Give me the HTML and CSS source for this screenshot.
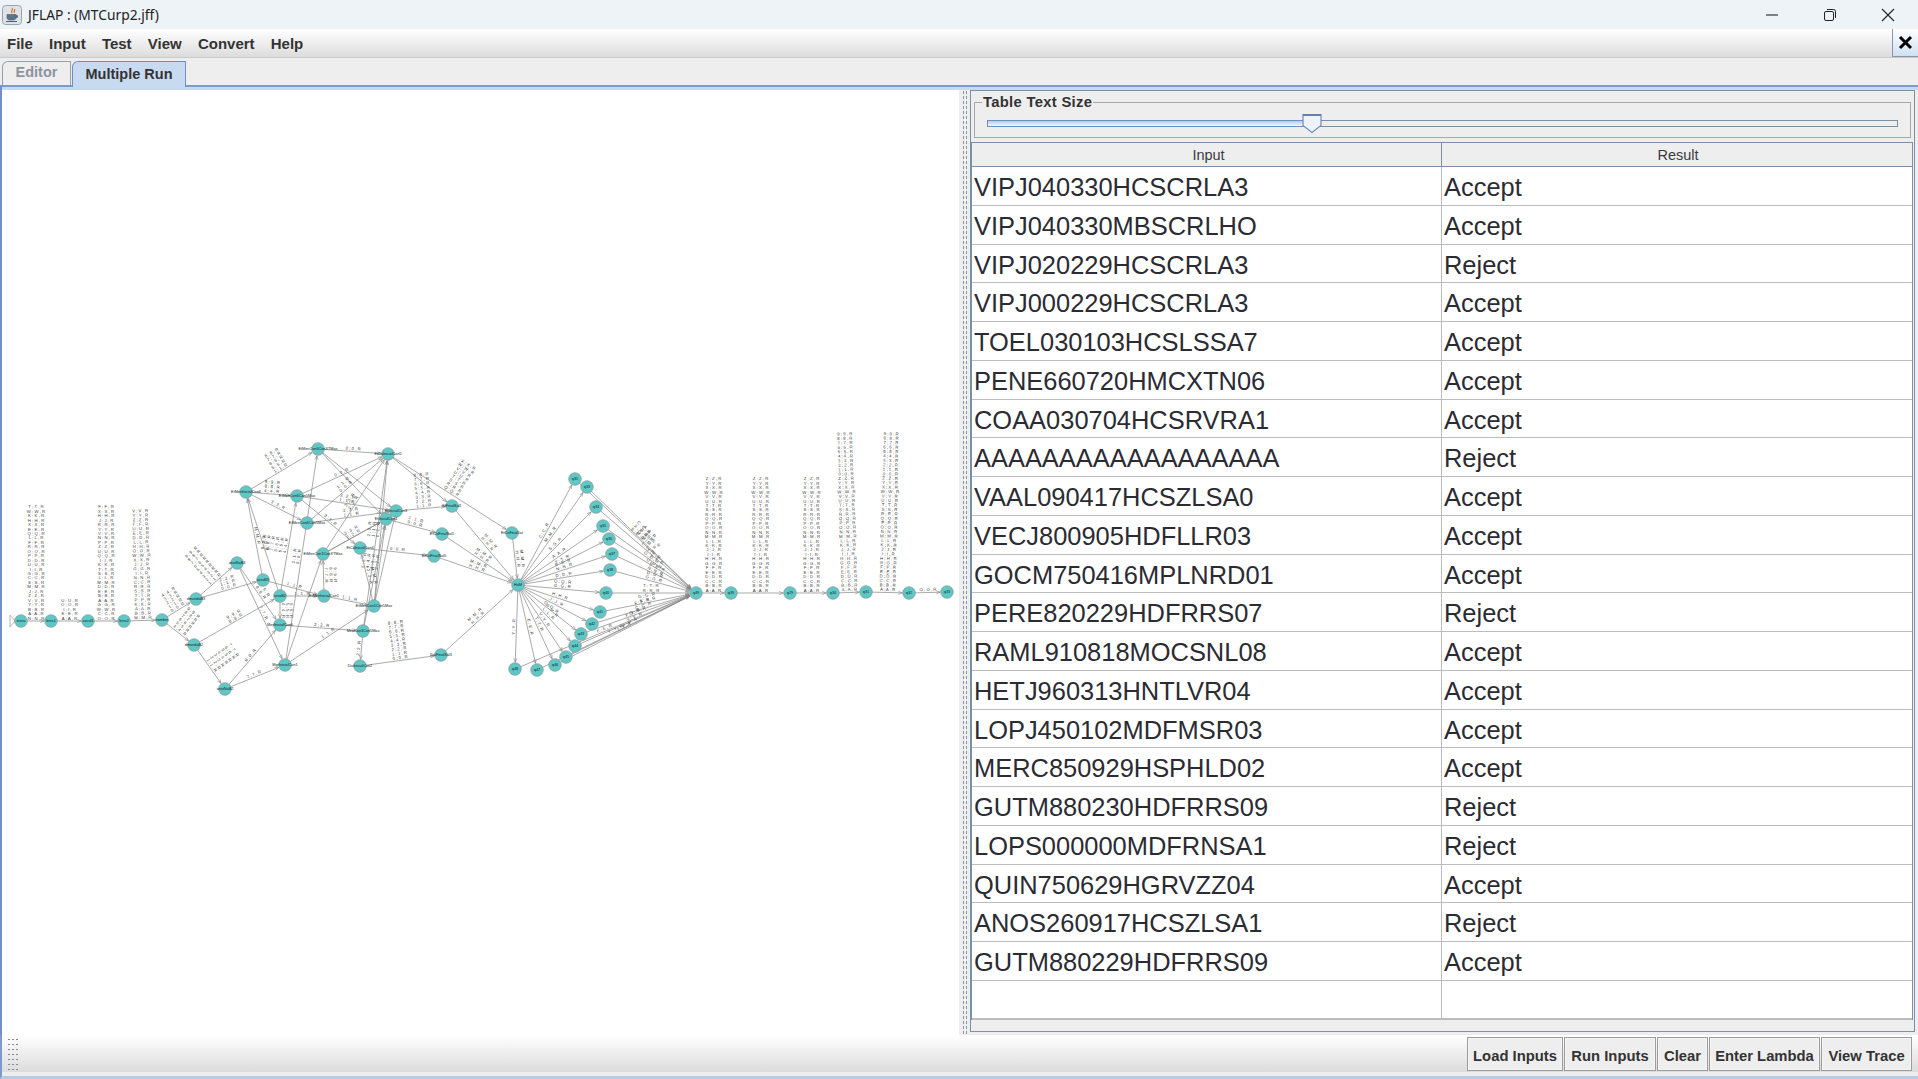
FILE: index.html
```html
<!DOCTYPE html>
<html>
<head>
<meta charset="utf-8">
<title>JFLAP : (MTCurp2.jff)</title>
<link rel="stylesheet" href="styles.css">
</head>
<body>

<div class="titlebar">
	<svg class="appicon" width="20" height="20" viewBox="0 0 20 20">
		<rect x="0.5" y="0.5" width="19" height="19" rx="3" fill="#dfe3e8" stroke="#9aa3ad"/>
		<path d="M10 3c2 2-2 3 0 5M12.500 4c1 1.500-1.500 2.500 0 4" fill="none" stroke="#e0762a" stroke-width="1.300"/>
		<path d="M5 9.500h9v3c0 2-1.500 2.500-3 2.500h-3c-1.500 0-3-.5-3-2.500zM14 10.500h1.500v2H14" fill="#5b7488" stroke="#4a5f72" stroke-width="0.600"/>
		<path d="M4 16.500h11" stroke="#4a5f72" stroke-width="1"/>
	</svg>
	<span class="title">JFLAP : (MTCurp2.jff)</span>
	<div class="winbtns">
		<svg width="14" height="14" viewBox="0 0 14 14"><path d="M1 7h12" stroke="#222" stroke-width="1.100"/></svg>
		<svg width="14" height="14" viewBox="0 0 14 14"><rect x="1.500" y="3.500" width="9" height="9" rx="1.500" fill="none" stroke="#222"/><path d="M4 1.500h6.500a2 2 0 0 1 2 2V10" fill="none" stroke="#222"/></svg>
		<svg width="14" height="14" viewBox="0 0 14 14"><path d="M1 1l12 12M13 1L1 13" stroke="#222" stroke-width="1.100"/></svg>
	</div>
</div>

<div class="menubar">
	<span>File</span>
	<span>Input</span>
	<span>Test</span>
	<span>View</span>
	<span>Convert</span>
	<span>Help</span>
	<div class="closetab">
		<svg width="15" height="15" viewBox="0 0 15 15"><path d="M2 2l11 11M13 2L2 13" stroke="#000" stroke-width="3"/></svg>
	</div>
</div>

<div class="tabs">
	<div class="tab">Editor</div>
	<div class="tab active">Multiple Run</div>
</div>

<div class="main">
	<div class="canvas">
		<svg id="graph" viewBox="2 90 957 945" width="957" height="945"></svg>
	</div>
	<div class="splitter"></div>
	<div class="panel">
		<fieldset class="sizebox">
			<legend>Table Text Size</legend>
			<div class="track">
				<div class="trackfill" style="width: 319px"></div>
				<svg class="thumb" width="20" height="21" viewBox="0 0 20 21">
					<path d="M1 1.500h18v11l-9 7-9-7z" fill="#eef3fa" stroke="#6d8ec4" stroke-width="1.200"/>
					<path d="M1 2h18" stroke="#5f7fb5" stroke-width="2"/>
				</svg>
			</div>
		</fieldset>
		<div class="tablewrap">
			<div class="row head"><span>Input</span><span>Result</span></div>
			<div class="row"><span>VIPJ040330HCSCRLA3</span><span>Accept</span></div>
			<div class="row"><span>VIPJ040330MBSCRLHO</span><span>Accept</span></div>
			<div class="row"><span>VIPJ020229HCSCRLA3</span><span>Reject</span></div>
			<div class="row"><span>VIPJ000229HCSCRLA3</span><span>Accept</span></div>
			<div class="row"><span>TOEL030103HCSLSSA7</span><span>Accept</span></div>
			<div class="row"><span>PENE660720HMCXTN06</span><span>Accept</span></div>
			<div class="row"><span>COAA030704HCSRVRA1</span><span>Accept</span></div>
			<div class="row"><span>AAAAAAAAAAAAAAAAAA</span><span>Reject</span></div>
			<div class="row"><span>VAAL090417HCSZLSA0</span><span>Accept</span></div>
			<div class="row"><span>VECJ800905HDFLLR03</span><span>Accept</span></div>
			<div class="row"><span>GOCM750416MPLNRD01</span><span>Accept</span></div>
			<div class="row"><span>PERE820229HDFRRS07</span><span>Reject</span></div>
			<div class="row"><span>RAML910818MOCSNL08</span><span>Accept</span></div>
			<div class="row"><span>HETJ960313HNTLVR04</span><span>Accept</span></div>
			<div class="row"><span>LOPJ450102MDFMSR03</span><span>Accept</span></div>
			<div class="row"><span>MERC850929HSPHLD02</span><span>Accept</span></div>
			<div class="row"><span>GUTM880230HDFRRS09</span><span>Reject</span></div>
			<div class="row"><span>LOPS000000MDFRNSA1</span><span>Reject</span></div>
			<div class="row"><span>QUIN750629HGRVZZ04</span><span>Accept</span></div>
			<div class="row"><span>ANOS260917HCSZLSA1</span><span>Reject</span></div>
			<div class="row"><span>GUTM880229HDFRRS09</span><span>Accept</span></div>
			<div class="row empty"><span></span><span></span></div>
		</div>
	</div>
</div>

<div class="toolbar">
	<div class="grip"></div>
	<div class="buttons">
		<button class="load">Load Inputs</button>
		<button class="run">Run Inputs</button>
		<button class="clear">Clear</button>
		<button class="lambda">Enter Lambda</button>
		<button class="trace">View Trace</button>
	</div>
</div>

<script src="graph.js"></script>
</body>
</html>
```

FILE: styles.css
```css
html, body {
	margin: 0;
	height: 100%;
}
body {
	width: 1918px;
	height: 1079px;
	overflow: hidden;
	font-family: "Liberation Sans", Arial, sans-serif;
	color: #333;
	background-color: #eeeeee;
	display: flex;
	flex-direction: column;
}

.titlebar {
	height: 29px;
	flex: none;
	display: flex;
	align-items: center;
	padding-left: 2px;
	background-color: #eef3f8;
}
.title {
	margin-left: 6px;
	font-family: "Noto Sans", sans-serif;
	font-size: 13.800px;
	color: #222;
}
.winbtns {
	margin-left: auto;
	display: flex;
	gap: 44px;
	padding-right: 23px;
}
.appicon {
	display: block;
}

.menubar {
	height: 27px;
	flex: none;
	display: flex;
	align-items: center;
	gap: 16.200px;
	padding: 1px 0 0 7px;
	font-size: 15px;
	font-weight: bold;
	border-bottom: 1px solid #c9c9c9;
	background: linear-gradient(#ffffff, #dcdcdc);
}
.closetab {
	margin-left: auto;
	width: 25px;
	height: 27px;
	margin-top: -1px;
	display: flex;
	align-items: center;
	justify-content: center;
	border: 1px solid #8396aa;
	border-width: 0 0 1px 1px;
	background: linear-gradient(#ffffff, #cfe0f2);
}

.tabs {
	height: 27px;
	flex: none;
	display: flex;
	align-items: flex-end;
	padding-left: 2px;
	gap: 1px;
	font-size: 14.500px;
	font-weight: bold;
}
.tab {
	height: 23px;
	width: 67px;
	border: 1px solid #98a0a8;
	border-bottom: none;
	border-top-left-radius: 6px;
	text-align: center;
	line-height: 21px;
	color: #8b93a1;
	background-color: #eeeeee;
}
.tab.active {
	width: 112px;
	height: 25px;
	margin-bottom: -2px;
	position: relative;
	line-height: 25px;
	color: #333;
	border-color: #6d8ec4;
	background-color: #c8daf0;
}

.main {
	height: 950px;
	flex: none;
	box-sizing: border-box;
	display: flex;
	border-top: 2px solid #7d9aca;
	border-left: 2px solid #6f90c8;
	padding-top: 3px;
	background: linear-gradient(#c8daf0 3px, #eeeeee 3px);
}
.canvas {
	width: 957px;
	flex: none;
	background-color: #ffffff;
}
#graph {
	display: block;
}
.edgetext {
	font-size: 4.300px;
	fill: #404040;
	text-anchor: middle;
}
.nodetext {
	font-size: 3.800px;
	fill: #102525;
	text-anchor: middle;
}
.splitter {
	width: 6px;
	flex: none;
	margin: 0 2px 0 3px;
	background-image: radial-gradient(#8a97a6 0.7px, transparent 0.8px);
	background-size: 3px 5px;
}
.panel {
	width: 945px;
	height: 942px;
	flex: none;
	box-sizing: border-box;
	border: 1px solid #7b8fa5;
	padding: 0 1px 0 0;
}

.sizebox {
	margin: 3px 2px 0 3px;
	padding: 0;
	height: 44px;
	box-sizing: border-box;
	border: 1px solid #a8a8a8;
}
.sizebox legend {
	margin-left: 7px;
	padding: 0 1px;
	font-size: 14.800px;
	font-weight: bold;
	letter-spacing: 0.300px;
}
.track {
	position: relative;
	margin: 10px 12px 0 12px;
	height: 7px;
	box-sizing: border-box;
	border: 1px solid #7b8fa5;
}
.trackfill {
	height: 5px;
	background: linear-gradient(#b9cde8, #f3f7fc);
	box-shadow: 0 0 0 1px #6d8ec4;
}
.thumb {
	position: absolute;
	left: 314px;
	top: -8px;
}

.tablewrap {
	margin-top: 4px;
	border-top: 1px solid #7b8fa5;
	border-left: 1px solid #7b8fa5;
	border-right: 1px solid #7b8fa5;
}
.row {
	height: 38.760px;
	box-sizing: border-box;
	display: flex;
	align-items: center;
	font-size: 25.450px;
	color: #2b2b33;
	background-color: #ffffff;
	border-bottom: 1px solid #bbbbbb;
}
.row span {
	width: 470px;
	height: 100%;
	flex: none;
	box-sizing: border-box;
	padding-left: 2px;
	line-height: 41px;
	border-right: 1px solid #bbbbbb;
}
.row span:last-child {
	flex: 1;
	width: auto;
	border-right: none;
}
.row.head {
	height: 24px;
	font-size: 14.500px;
	color: #3a3a40;
	background-color: #eeeeee;
	border-bottom: 1px solid #7b8fa5;
}
.row.head span {
	text-align: center;
	line-height: 25px;
	border-color: #7b8fa5;
}
.row.head span:first-child {
	padding-left: 4px;
}
.row.empty {
	height: 39px;
	border-bottom: 2px solid #bbbbbb;
}

.toolbar {
	flex: 1;
	display: flex;
	align-items: flex-start;
	justify-content: space-between;
	box-sizing: border-box;
	padding: 2px 6px 0 5px;
	border-left: 2px solid #7d9aca;
	border-bottom: 3px solid #b6cce6;
	background: linear-gradient(#ffffff, #dcdcdc 90%, #eeeeee 90%);
}
.grip {
	width: 12px;
	height: 35px;
	background-image: radial-gradient(#7f8c9b 0.7px, transparent 0.8px);
	background-size: 4px 5px;
}
.buttons {
	display: flex;
	gap: 1px;
}
.buttons button {
	height: 34px;
	box-sizing: border-box;
	padding: 3px 0 0 0;
	border: 1px solid #9c9c9c;
	outline: 1px solid #f5f5f5;
	outline-offset: -2px;
	font-family: "Liberation Sans", Arial, sans-serif;
	font-size: 14.800px;
	font-weight: bold;
	color: #333;
	background-color: #eeeeee;
}
.load { width: 96px; }
.run { width: 92px; }
.clear { width: 51px; }
.lambda { width: 111px; }
.trace { width: 91px; }
```

FILE: graph.js
```js
// Turing machine drawn the way JFLAP lays it out: label stacks sit on the edge midpoint.
var nodes = {
	inicio: [21, 621, "inicio"], l1: [51, 621, "letra1"], v1: [88, 621, "vocal1"], l2: [124, 621, "letra2"],
	nom: [162, 620, "nombre"], dm3: [196, 599, "dmundaB3"], dm2: [194, 645, "dmundaB2"],
	an3: [237, 563, "anioNaB3"], ab3: [263, 580, "anioB3"], ab2: [280, 596, "anioB2"],
	mes: [280, 625, "MesInicialCon6"], an2: [225, 689, "anioNaB2"], mgr: [285, 665, "MgrInicialCon1"],
	e6: [246, 492, "EtMenInicialCon6"], ex: [318, 449, "EtMenCon6CanXTMas"], c5: [388, 454, "EtCaInicialCon5"],
	e5: [297, 496, "EtMenCon6Can5Mas"], e4: [307, 523, "EtMenCon6Con5Mas"], i3: [396, 511, "EtInicialCon3"],
	i4: [386, 519, "EtInicialCon4"], e1x: [323, 554, "EtMenCon1ConXTMas"], c4: [360, 548, "EtCaInicialCon4"],
	e1: [324, 596, "EtMenInicialCon1"], e15: [374, 606, "EtMenCon1Con5Mas"], m3: [363, 631, "MenCon3Con5Mas"],
	di: [360, 666, "DiaInicialCon2"], df: [441, 655, "DiaFinalSal3"], f2: [452, 506, "EtFinalSal1"],
	f1: [442, 534, "EtCaFinalSal1"], f0: [434, 556, "EtCaFinalSal0"], fa: [512, 533, "EtCaFinal1at"],
	hom: [518, 585, "HoM"], q31: [575, 479, "q31"], q33: [587, 487, "q33"], q34: [596, 507, "q34"],
	q35: [603, 526, "q35"], q36: [609, 539, "q36"], q37: [612, 554, "q37"], q38: [610, 570, "q38"],
	q40: [606, 593, "q40"], q41: [600, 612, "q41"], q42: [592, 624, "q42"], q43: [581, 634, "q43"],
	q44: [575, 646, "q44"], q45: [566, 657, "q45"], q46: [555, 665, "q46"], q47: [537, 670, "q47"],
	q48: [515, 669, "q48"], qh: [696, 593, "q49"], r1: [731, 593, "q39"], r2: [790, 593, "q29"],
	r3: [833, 593, "q30"], r4: [866, 592, "q31"], r5: [909, 593, "q32"], r6: [947, 592, "q33"]
};

var az = "ZYXWVUTSRQPONMLKJIHGFEDCBA";
var num = "9876543210";

var edges = [
	["inicio", "l1", "TWKHXEQLFROPDUIGCSMJZVYBAN"], ["l1", "v1", "UOIEA"],
	["v1", "l2", "FXHJRYVNPZUQIKTSLMDEBAGWCO"], ["l2", "nom", "VYZFUEDLHOWXJGINCRSTPKABM"],
	["nom", "dm3", "43210"], ["nom", "dm2", "987654"], ["dm3", "an3", "987654321"], ["dm3", "ab3", "210"],
	["dm2", "ab2", "98"], ["dm2", "an2", "7654321"], ["an3", "mes", "98"], ["an3", "mgr", "7"],
	["ab3", "e6", "M"], ["ab2", "e6", "0"], ["ab3", "e1", "1"], ["ab2", "e1", "1"], ["ab2", "e5", "987654"],
	["ab2", "mes", "654"], ["an2", "mes", "0"], ["an2", "mgr", "7"], ["mes", "m3", "2"], ["mgr", "ex", "10"],
	["mgr", "e1x", ""], ["mgr", "e15", "1"], ["e6", "ex", "87651"], ["e6", "e5", "984"], ["e6", "e4", "3"],
	["ex", "c5", "0"], ["ex", "i3", ""], ["ex", "i4", ""], ["e5", "c5", "0"], ["e5", "i3", "21"], ["e5", "c4", "3"],
	["e4", "c5", "10"], ["e4", "i3", "21"], ["e1x", "c5", "32"], ["e1x", "i4", "32"], ["e1x", "i4", ""],
	["e1", "e1x", "987"], ["e1", "e15", "1"], ["e15", "c5", "210"], ["e15", "i3", ""], ["e15", "i4", "5432"],
	["e15", "c4", "M2"], ["m3", "i4", ""], ["m3", "c5", ""], ["m3", "di", "2"], ["di", "df", "876543210"],
	["df", "hom", "MH"], ["c5", "fa", "XWVUTSRQ"], ["c5", "f2", ""], ["i3", "f2", "87654321"], ["i4", "f1", "10"],
	["c4", "f0", "0"], ["f2", "hom", "MH"], ["f1", "hom", "MH"], ["f0", "hom", "MH"], ["fa", "hom", "MH"],
	["hom", "q31", "C"], ["hom", "q33", "M"], ["hom", "q34", "S"], ["hom", "q35", "A"], ["hom", "q36", "T"],
	["hom", "q37", "BN"], ["hom", "q38", "D"], ["hom", "q40", "QG"], ["hom", "q41", "H"], ["hom", "q42", "J"],
	["hom", "q43", "O"], ["hom", "q44", "PL"], ["hom", "q45", "V"], ["hom", "q46", "T"], ["hom", "q47", "E"],
	["hom", "q48", "Y"], ["q31", "qh", "CXE"], ["q33", "qh", "ABM"], ["q34", "qh", "SIL"], ["q35", "qh", "YO"],
	["q36", "qh", "TU"], ["q37", "qh", "BN"], ["q38", "qh", "DG"], ["q40", "qh", "TR"], ["q41", "qh", "GS"],
	["q42", "qh", "FC"], ["q43", "qh", "O"], ["q44", "qh", "XV"], ["q45", "qh", "P"], ["q46", "qh", "L"],
	["q47", "qh", "Y"], ["q48", "qh", "E"], ["qh", "r1", az], ["r1", "r2", az], ["r2", "r3", az],
	["r3", "r4", num + az], ["r4", "r5", num + az], ["r5", "r6", "O"]
];

var svgNS = "http://www.w3.org/2000/svg";
var graph = document.getElementById("graph");

function make(tag, attrs, parent) {
	var el = document.createElementNS(svgNS, tag);
	for (var k in attrs) el.setAttribute(k, attrs[k]);
	parent.appendChild(el);
	return el;
}

// start state triangle
make("path", { d: "M10 615v12l5-6z", fill: "none", stroke: "#999", "stroke-width": 0.7 }, graph);

for (var i = 0; i < edges.length; i++) {
	var a = nodes[edges[i][0]], b = nodes[edges[i][1]], chars = edges[i][2];
	var dx = b[0] - a[0], dy = b[1] - a[1], len = Math.sqrt(dx * dx + dy * dy);
	var ux = dx / len, uy = dy / len;
	var ex = b[0] - ux * 6.800, ey = b[1] - uy * 6.800;
	make("line", { x1: a[0], y1: a[1], x2: ex, y2: ey, stroke: "#858585", "stroke-width": 0.7 }, graph);
	// open arrow head
	var hx = ex - ux * 4, hy = ey - uy * 4;
	make("path", {
		d: "M" + (hx - uy * 1.600) + " " + (hy + ux * 1.600) + "L" + ex + " " + ey + "L" + (hx + uy * 1.600) + " " + (hy - ux * 1.600),
		fill: "none", stroke: "#858585", "stroke-width": 0.6
	}, graph);

	// text stack, rotated with the edge so it stays upright
	var angle = Math.atan2(dy, dx) * 180 / Math.PI;
	if (angle > 90) angle -= 180;
	if (angle < -90) angle += 180;
	var mx = (a[0] + b[0]) / 2, my = (a[1] + b[1]) / 2;
	var g = make("g", { transform: "translate(" + mx + " " + my + ") rotate(" + angle + ")" }, graph);
	for (var j = 0; j < chars.length; j++) {
		var c = chars[chars.length - 1 - j];
		var t = make("text", { x: 0, y: -1.500 - j * 4.450, "class": "edgetext" }, g);
		t.textContent = c + " ; " + c + " , R";
	}
}

for (var n in nodes) {
	var p = nodes[n];
	make("circle", { cx: p[0], cy: p[1], r: 6.300, fill: "#5fc7c5", stroke: "#8a9797", "stroke-width": 0.7 }, graph);
	var label = make("text", { x: p[0], y: p[1] + 1.300, "class": "nodetext" }, graph);
	label.textContent = p[2];
}
```
